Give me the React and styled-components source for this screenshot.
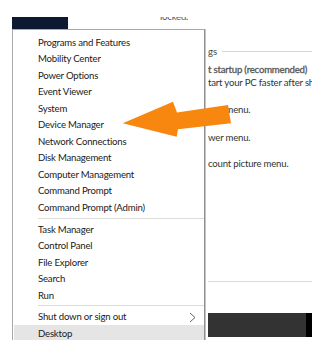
import React from 'react';
import styled, { createGlobalStyle } from 'styled-components';

const GlobalStyle = createGlobalStyle`
  html, body { margin: 0; padding: 0; background: #fff; }
  body { font-family: Lato, "Open Sans", sans-serif; }
`;

const Screen = styled('div')`
  position: relative;
  width: 335px;
  height: 362px;
  overflow: hidden;
  background: #fff;
`;

const TopRow = styled('div')`
  display: flex;
  align-items: flex-start;
  height: 29px;
`;

const DarkTile = styled('div')`
  width: 56px;
  height: 12px;
  margin: 17px 0 0 12px;
  background: #0c1a31;
`;

const LockedText = styled('div')`
  margin: 17px 0 0 92px;
  height: 4px;
  overflow: hidden;
  font-size: 9.6px;
  letter-spacing: -0.2px;
  line-height: 14px;
  color: #555;
  span { display: block; margin-top: -7.5px; }
`;

const Panel = styled('div')`
  margin-left: 208px;
  width: 104px;
  overflow: hidden;
  display: flex;
  flex-direction: column;
`;

const Heading = styled('div')`
  display: flex;
  align-items: center;
  gap: 5px;
  margin-top: 15px;
  height: 14px;
  font-size: 9.6px;
  color: #444;
  &::after {
    content: '';
    flex: 1;
    height: 1px;
    background: #d6d6d6;
  }
`;

const Line = styled('div')`
  white-space: nowrap;
  font-size: 9.6px;
  letter-spacing: -0.2px;
  line-height: 12px;
  height: 12px;
  color: ${p => (p.$strong ? '#5c5c5c' : '#333')};
  -webkit-text-stroke: ${p => (p.$strong ? '0.35px #5c5c5c' : '0')};
  margin-top: ${p => p.$gap || 0}px;
`;

const Rule = styled('div')`
  height: 1px;
  background: #d9d9d9;
  margin-top: ${p => p.$gap}px;
`;

const DarkBar = styled('div')`
  margin-top: 31px;
  height: 24px;
  background: linear-gradient(to right, #333 0, #333 94%, #000 94%);
`;

const Menu = styled('div')`
  position: absolute;
  left: 12px;
  top: 29px;
  width: 193px;
  height: 311px;
  overflow: hidden;
  background: #fff;
  border-top: 1px solid #a8a8a8;
  border-left: 1px solid #a8a8a8;
  border-right: 1px solid #8e8e8e;
  box-shadow: 1px 0 0 #c4c4c4;
  padding-top: 4px;
  box-sizing: border-box;
  font-size: 9.6px;
  letter-spacing: -0.2px;
  color: #1a1a1a;
`;

const Item = styled('div')`
  position: relative;
  display: flex;
  align-items: center;
  height: 16.5px;
  margin-left: ${p => (p.$active ? '1px' : '0')};
  padding-left: ${p => (p.$active ? '24px' : '25px')};
  background: ${p => (p.$active ? '#e5e5e5' : 'transparent')};
  white-space: nowrap;
`;

const Separator = styled('div')`
  height: 1px;
  margin: 2px 0 2.25px 25px;
  background: #dcdcdc;
`;

const Chevron = styled('svg')`
  position: absolute;
  right: 8px;
  top: 3px;
`;

const Arrow = styled('svg')`
  position: absolute;
  left: 0;
  top: 0;
  pointer-events: none;
`;

const group1 = [
  'Programs and Features',
  'Mobility Center',
  'Power Options',
  'Event Viewer',
  'System',
  'Device Manager',
  'Network Connections',
  'Disk Management',
  'Computer Management',
  'Command Prompt',
  'Command Prompt (Admin)',
];

const group2 = ['Task Manager', 'Control Panel', 'File Explorer', 'Search', 'Run'];

export default function App() {
  return (
    <Screen>
      <GlobalStyle />
      <TopRow>
        <DarkTile />
        <LockedText><span>locked.</span></LockedText>
      </TopRow>

      <Panel>
        <Heading>gs</Heading>
        <Line $strong $gap={6}>t startup (recommended)</Line>
        <Line $gap={1}>tart your PC faster after shutdown.</Line>
        <Line $gap={15}>wer menu.</Line>
        <Line $gap={16}>wer menu.</Line>
        <Line $gap={14}>count picture menu.</Line>
        <Rule $gap={111} />
        <DarkBar />
      </Panel>

      <Menu>
        {group1.map(t => <Item key={t}>{t}</Item>)}
        <Separator />
        {group2.map(t => <Item key={t}>{t}</Item>)}
        <Separator />
        <Item>
          Shut down or sign out
          <Chevron width="7" height="11" viewBox="0 0 7 11">
            <path d="M1 1l5 4.5L1 10" fill="none" stroke="#666" strokeWidth="1" />
          </Chevron>
        </Item>
        <Item $active>Desktop</Item>
      </Menu>

      <Arrow width="335" height="362" viewBox="0 0 335 362">
        <polygon
          points="122.7,123.3 173,101.7 177,112.5 228,105 231,123.3 178,129.3 176.7,136.7"
          fill="#f7870f"
        />
      </Arrow>
    </Screen>
  );
}
